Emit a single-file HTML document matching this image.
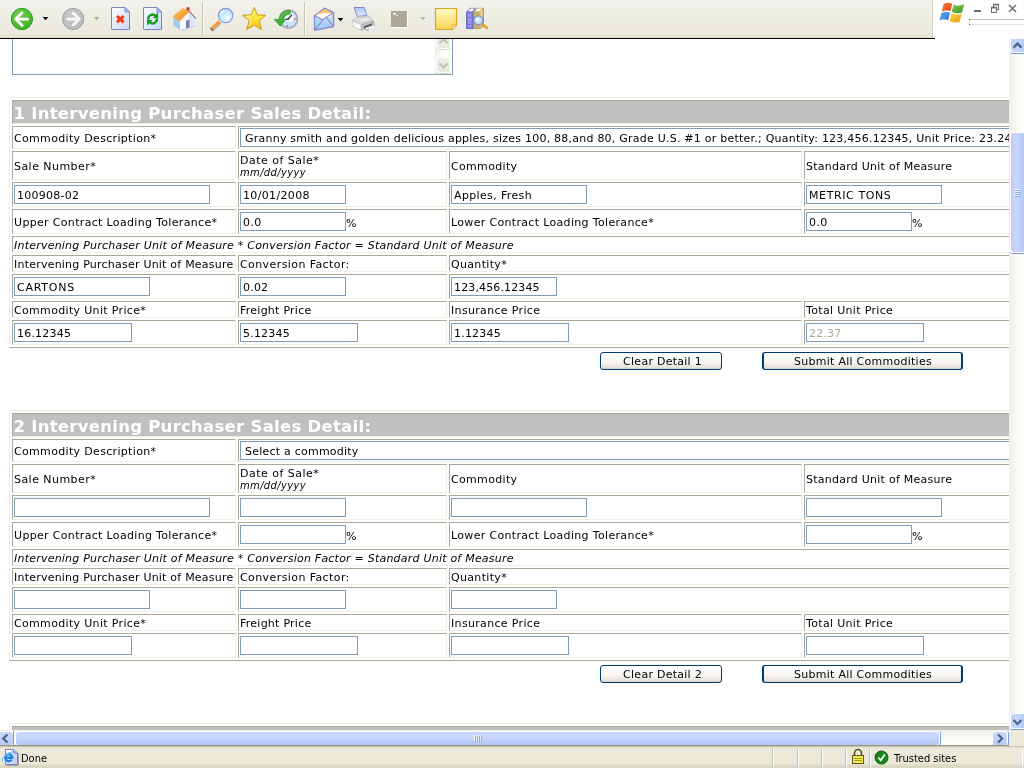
<!DOCTYPE html>
<html lang="en"><head><meta charset="utf-8"><title>Intervening Purchaser Sales Detail</title>
<style>
html,body{margin:0;padding:0}
body{width:1024px;height:768px;overflow:hidden;background:#fff;position:relative;font:11px "DejaVu Sans","Liberation Sans",sans-serif;color:#000}
.a{position:absolute}
.t{position:absolute;white-space:nowrap;line-height:13px;height:13px;letter-spacing:0.33px}
.i{font-style:italic}
.c{position:absolute;box-sizing:border-box;border:1px solid;border-color:#aca899 #f1efe2 #f1efe2 #aca899;background:#fff}
.tb{position:absolute;box-sizing:border-box;border:1px solid;border-color:#f1efe2 #aca899 #aca899 #f1efe2;background:#fff}
.h{background:#c0c0c0}
.ht{position:absolute;white-space:nowrap;font:bold 16.5px "DejaVu Sans","Liberation Sans",sans-serif;color:#fff;line-height:19px;letter-spacing:0.27px}
.in{position:absolute;box-sizing:border-box;border:1px solid #7f9db9;background:#fff;height:19px}
.in span{position:absolute;left:2px;top:3px;white-space:nowrap;line-height:13px;letter-spacing:0.2px}
.dis span{color:#aca899}
.btn{position:absolute;box-sizing:border-box;border:1px solid #003c74;border-radius:3px;background:linear-gradient(#fff 0%,#f6f5f0 60%,#e0ddd0 100%);text-align:center;line-height:17px;height:18px;letter-spacing:0.26px;box-shadow:inset 0 -1px 0 #d6d0c5}
.st{position:absolute;will-change:transform;white-space:nowrap;font:11px "DejaVu Sans Condensed","Liberation Sans",sans-serif;line-height:13px}
</style></head>
<body>
<div class="a" id="content" style="left:0;top:39px;width:1009px;height:691px;overflow:hidden;background:#fff"><div class="a" style="left:0;top:-39px;width:1100px;height:900px;will-change:transform">
<div class="a" style="left:12px;top:20px;width:441px;height:55px;box-sizing:border-box;border:1px solid #7f9db9;background:#fff"></div>
<div class="a" id="tasb" style="left:435px;top:21px;width:17px;height:53px;background:linear-gradient(90deg,#efeee5 0,#f8f7f1 3px,#fdfdf9 9px,#fefefb 17px)"></div>
<div class="a" style="left:436px;top:30px;width:15px;height:19px;background:#fff;border-radius:3px;box-shadow:0 1px 0 #dbd9c8"></div>
<div class="a" style="left:437px;top:30px;width:13px;height:18px;background:linear-gradient(#f0efe8,#eae9e0);border-radius:3px"></div>
<svg class="a" style="left:437px;top:36px" width="13" height="12" viewBox="0 0 13 12"><path d="M2.300 7.200 L6.500 3.200 L10.700 7.200" fill="none" stroke="#c6c4b6" stroke-width="2.200"/></svg>
<div class="a" style="left:436px;top:57px;width:15px;height:16px;background:#fff;border-radius:3px;box-shadow:0 1px 0 #dbd9c8"></div>
<div class="a" style="left:437px;top:58px;width:13px;height:14px;background:linear-gradient(#f0efe8,#eae9e0);border-radius:3px"></div>
<svg class="a" style="left:437px;top:58px" width="13" height="14" viewBox="0 0 13 14"><path d="M2.300 5.400 L6.500 9.400 L10.700 5.400" fill="none" stroke="#c6c4b6" stroke-width="2.200"/></svg>
<div class="tb" style="left:9px;top:97px;width:1067px;height:251px"></div>
<div class="c h" style="left:12px;top:100px;width:1061px;height:24px"></div>
<div class="ht" style="left:13.5px;top:104px;">1 Intervening Purchaser Sales Detail:</div>
<div class="c" style="left:12px;top:126px;width:224px;height:23px"></div>
<div class="t" style="left:14px;top:132px;">Commodity Description*</div>
<div class="c" style="left:238px;top:126px;width:835px;height:23px"></div>
<div class="in" style="left:240px;top:128px;width:831px"><span style="left:4px;letter-spacing:0.23px">Granny smith and golden delicious apples, sizes 100, 88,and 80, Grade U.S. #1 or better.; Quantity: 123,456.12345, Unit Price: 23.24</span></div>
<div class="c" style="left:12px;top:151px;width:224px;height:29px"></div>
<div class="t" style="left:14px;top:160px;letter-spacing:0.45px;">Sale Number*</div>
<div class="c" style="left:238px;top:151px;width:209px;height:29px"></div>
<div class="t" style="left:240px;top:154px;letter-spacing:0.48px;">Date of Sale*</div>
<div class="t i" style="left:240px;top:166px;font-size:10px">mm/dd/yyyy</div>
<div class="c" style="left:449px;top:151px;width:353px;height:29px"></div>
<div class="t" style="left:451px;top:160px;">Commodity</div>
<div class="c" style="left:804px;top:151px;width:269px;height:29px"></div>
<div class="t" style="left:806px;top:160px;letter-spacing:0.25px;">Standard Unit of Measure</div>
<div class="c" style="left:12px;top:182px;width:224px;height:25px"></div>
<div class="in" style="left:14px;top:185px;width:196px"><span style="letter-spacing:0.25px">100908-02</span></div>
<div class="c" style="left:238px;top:182px;width:209px;height:25px"></div>
<div class="in" style="left:240px;top:185px;width:106px"><span style="letter-spacing:0.35px">10/01/2008</span></div>
<div class="c" style="left:449px;top:182px;width:353px;height:25px"></div>
<div class="in" style="left:451px;top:185px;width:136px"><span style="letter-spacing:0.36px">Apples, Fresh</span></div>
<div class="c" style="left:804px;top:182px;width:269px;height:25px"></div>
<div class="in" style="left:806px;top:185px;width:136px"><span style="letter-spacing:0.6px">METRIC TONS</span></div>
<div class="c" style="left:12px;top:209px;width:224px;height:25px"></div>
<div class="t" style="left:14px;top:216px;">Upper Contract Loading Tolerance*</div>
<div class="c" style="left:238px;top:209px;width:209px;height:25px"></div>
<div class="in" style="left:240px;top:212px;width:106px"><span style="letter-spacing:0.38px">0.0</span></div>
<div class="t" style="left:346px;top:217px;">%</div>
<div class="c" style="left:449px;top:209px;width:353px;height:25px"></div>
<div class="t" style="left:451px;top:216px;">Lower Contract Loading Tolerance*</div>
<div class="c" style="left:804px;top:209px;width:269px;height:25px"></div>
<div class="in" style="left:806px;top:212px;width:106px"><span style="letter-spacing:0.38px">0.0</span></div>
<div class="t" style="left:912px;top:217px;">%</div>
<div class="c" style="left:12px;top:236px;width:1061px;height:17px"></div>
<div class="t i" style="left:14px;top:239px;letter-spacing:0.22px;">Intervening Purchaser Unit of Measure * Conversion Factor = Standard Unit of Measure</div>
<div class="c" style="left:12px;top:255px;width:224px;height:17px"></div>
<div class="t" style="left:14px;top:258px;letter-spacing:0.22px;">Intervening Purchaser Unit of Measure</div>
<div class="c" style="left:238px;top:255px;width:209px;height:17px"></div>
<div class="t" style="left:240px;top:258px;letter-spacing:0.41px;">Conversion Factor:</div>
<div class="c" style="left:449px;top:255px;width:624px;height:17px"></div>
<div class="t" style="left:451px;top:258px;">Quantity*</div>
<div class="c" style="left:12px;top:274px;width:224px;height:25px"></div>
<div class="in" style="left:14px;top:277px;width:136px"><span style="letter-spacing:0.76px">CARTONS</span></div>
<div class="c" style="left:238px;top:274px;width:209px;height:25px"></div>
<div class="in" style="left:240px;top:277px;width:106px"><span>0.02</span></div>
<div class="c" style="left:449px;top:274px;width:624px;height:25px"></div>
<div class="in" style="left:451px;top:277px;width:106px"><span style="letter-spacing:0.13px">123,456.12345</span></div>
<div class="c" style="left:12px;top:301px;width:224px;height:17px"></div>
<div class="t" style="left:14px;top:304px;">Commodity Unit Price*</div>
<div class="c" style="left:238px;top:301px;width:209px;height:17px"></div>
<div class="t" style="left:240px;top:304px;letter-spacing:0.25px;">Freight Price</div>
<div class="c" style="left:449px;top:301px;width:353px;height:17px"></div>
<div class="t" style="left:451px;top:304px;">Insurance Price</div>
<div class="c" style="left:804px;top:301px;width:269px;height:17px"></div>
<div class="t" style="left:806px;top:304px;">Total Unit Price</div>
<div class="c" style="left:12px;top:320px;width:224px;height:25px"></div>
<div class="in" style="left:14px;top:323px;width:118px"><span>16.12345</span></div>
<div class="c" style="left:238px;top:320px;width:209px;height:25px"></div>
<div class="in" style="left:240px;top:323px;width:118px"><span>5.12345</span></div>
<div class="c" style="left:449px;top:320px;width:353px;height:25px"></div>
<div class="in" style="left:451px;top:323px;width:118px"><span>1.12345</span></div>
<div class="c" style="left:804px;top:320px;width:269px;height:25px"></div>
<div class="in dis" style="left:806px;top:323px;width:118px"><span>22.37</span></div>
<div class="btn" style="left:600px;top:352px;width:122px;padding-left:3px"><span>Clear Detail 1</span></div>
<div class="btn" style="left:762px;top:352px;width:201px;border-left-width:2px;border-right-width:2px;padding-left:1px"><span>Submit All Commodities</span></div>
<div class="tb" style="left:9px;top:410px;width:1067px;height:251px"></div>
<div class="c h" style="left:12px;top:413px;width:1061px;height:24px"></div>
<div class="ht" style="left:13.5px;top:417px;">2 Intervening Purchaser Sales Detail:</div>
<div class="c" style="left:12px;top:439px;width:224px;height:23px"></div>
<div class="t" style="left:14px;top:445px;">Commodity Description*</div>
<div class="c" style="left:238px;top:439px;width:835px;height:23px"></div>
<div class="in" style="left:240px;top:441px;width:831px"><span style="left:4px;letter-spacing:0.23px">Select a commodity</span></div>
<div class="c" style="left:12px;top:464px;width:224px;height:29px"></div>
<div class="t" style="left:14px;top:473px;letter-spacing:0.45px;">Sale Number*</div>
<div class="c" style="left:238px;top:464px;width:209px;height:29px"></div>
<div class="t" style="left:240px;top:467px;letter-spacing:0.48px;">Date of Sale*</div>
<div class="t i" style="left:240px;top:479px;font-size:10px">mm/dd/yyyy</div>
<div class="c" style="left:449px;top:464px;width:353px;height:29px"></div>
<div class="t" style="left:451px;top:473px;">Commodity</div>
<div class="c" style="left:804px;top:464px;width:269px;height:29px"></div>
<div class="t" style="left:806px;top:473px;letter-spacing:0.25px;">Standard Unit of Measure</div>
<div class="c" style="left:12px;top:495px;width:224px;height:25px"></div>
<div class="in" style="left:14px;top:498px;width:196px"><span></span></div>
<div class="c" style="left:238px;top:495px;width:209px;height:25px"></div>
<div class="in" style="left:240px;top:498px;width:106px"><span></span></div>
<div class="c" style="left:449px;top:495px;width:353px;height:25px"></div>
<div class="in" style="left:451px;top:498px;width:136px"><span></span></div>
<div class="c" style="left:804px;top:495px;width:269px;height:25px"></div>
<div class="in" style="left:806px;top:498px;width:136px"><span></span></div>
<div class="c" style="left:12px;top:522px;width:224px;height:25px"></div>
<div class="t" style="left:14px;top:529px;">Upper Contract Loading Tolerance*</div>
<div class="c" style="left:238px;top:522px;width:209px;height:25px"></div>
<div class="in" style="left:240px;top:525px;width:106px"><span></span></div>
<div class="t" style="left:346px;top:530px;">%</div>
<div class="c" style="left:449px;top:522px;width:353px;height:25px"></div>
<div class="t" style="left:451px;top:529px;">Lower Contract Loading Tolerance*</div>
<div class="c" style="left:804px;top:522px;width:269px;height:25px"></div>
<div class="in" style="left:806px;top:525px;width:106px"><span></span></div>
<div class="t" style="left:912px;top:530px;">%</div>
<div class="c" style="left:12px;top:549px;width:1061px;height:17px"></div>
<div class="t i" style="left:14px;top:552px;letter-spacing:0.22px;">Intervening Purchaser Unit of Measure * Conversion Factor = Standard Unit of Measure</div>
<div class="c" style="left:12px;top:568px;width:224px;height:17px"></div>
<div class="t" style="left:14px;top:571px;letter-spacing:0.22px;">Intervening Purchaser Unit of Measure</div>
<div class="c" style="left:238px;top:568px;width:209px;height:17px"></div>
<div class="t" style="left:240px;top:571px;letter-spacing:0.41px;">Conversion Factor:</div>
<div class="c" style="left:449px;top:568px;width:624px;height:17px"></div>
<div class="t" style="left:451px;top:571px;">Quantity*</div>
<div class="c" style="left:12px;top:587px;width:224px;height:25px"></div>
<div class="in" style="left:14px;top:590px;width:136px"><span></span></div>
<div class="c" style="left:238px;top:587px;width:209px;height:25px"></div>
<div class="in" style="left:240px;top:590px;width:106px"><span></span></div>
<div class="c" style="left:449px;top:587px;width:624px;height:25px"></div>
<div class="in" style="left:451px;top:590px;width:106px"><span></span></div>
<div class="c" style="left:12px;top:614px;width:224px;height:17px"></div>
<div class="t" style="left:14px;top:617px;">Commodity Unit Price*</div>
<div class="c" style="left:238px;top:614px;width:209px;height:17px"></div>
<div class="t" style="left:240px;top:617px;letter-spacing:0.25px;">Freight Price</div>
<div class="c" style="left:449px;top:614px;width:353px;height:17px"></div>
<div class="t" style="left:451px;top:617px;">Insurance Price</div>
<div class="c" style="left:804px;top:614px;width:269px;height:17px"></div>
<div class="t" style="left:806px;top:617px;">Total Unit Price</div>
<div class="c" style="left:12px;top:633px;width:224px;height:25px"></div>
<div class="in" style="left:14px;top:636px;width:118px"><span></span></div>
<div class="c" style="left:238px;top:633px;width:209px;height:25px"></div>
<div class="in" style="left:240px;top:636px;width:118px"><span></span></div>
<div class="c" style="left:449px;top:633px;width:353px;height:25px"></div>
<div class="in" style="left:451px;top:636px;width:118px"><span></span></div>
<div class="c" style="left:804px;top:633px;width:269px;height:25px"></div>
<div class="in dis" style="left:806px;top:636px;width:118px"><span></span></div>
<div class="btn" style="left:600px;top:665px;width:122px;padding-left:3px"><span>Clear Detail 2</span></div>
<div class="btn" style="left:762px;top:665px;width:201px;border-left-width:2px;border-right-width:2px;padding-left:1px"><span>Submit All Commodities</span></div>
<div class="tb" style="left:9px;top:723px;width:1067px;height:251px"></div>
<div class="c h" style="left:12px;top:726px;width:1061px;height:24px"></div>
<div class="ht" style="left:13.5px;top:730px;">3 Intervening Purchaser Sales Detail:</div>
<div class="c" style="left:12px;top:752px;width:224px;height:23px"></div>
<div class="t" style="left:14px;top:758px;">Commodity Description*</div>
<div class="c" style="left:238px;top:752px;width:835px;height:23px"></div>
<div class="in" style="left:240px;top:754px;width:831px"><span style="left:4px;letter-spacing:0.23px">Select a commodity</span></div>
<div class="c" style="left:12px;top:777px;width:224px;height:29px"></div>
<div class="t" style="left:14px;top:786px;letter-spacing:0.45px;">Sale Number*</div>
<div class="c" style="left:238px;top:777px;width:209px;height:29px"></div>
<div class="t" style="left:240px;top:780px;letter-spacing:0.48px;">Date of Sale*</div>
<div class="t i" style="left:240px;top:792px;font-size:10px">mm/dd/yyyy</div>
<div class="c" style="left:449px;top:777px;width:353px;height:29px"></div>
<div class="t" style="left:451px;top:786px;">Commodity</div>
<div class="c" style="left:804px;top:777px;width:269px;height:29px"></div>
<div class="t" style="left:806px;top:786px;letter-spacing:0.25px;">Standard Unit of Measure</div>
<div class="c" style="left:12px;top:808px;width:224px;height:25px"></div>
<div class="in" style="left:14px;top:811px;width:196px"><span></span></div>
<div class="c" style="left:238px;top:808px;width:209px;height:25px"></div>
<div class="in" style="left:240px;top:811px;width:106px"><span></span></div>
<div class="c" style="left:449px;top:808px;width:353px;height:25px"></div>
<div class="in" style="left:451px;top:811px;width:136px"><span></span></div>
<div class="c" style="left:804px;top:808px;width:269px;height:25px"></div>
<div class="in" style="left:806px;top:811px;width:136px"><span></span></div>
<div class="c" style="left:12px;top:835px;width:224px;height:25px"></div>
<div class="t" style="left:14px;top:842px;">Upper Contract Loading Tolerance*</div>
<div class="c" style="left:238px;top:835px;width:209px;height:25px"></div>
<div class="in" style="left:240px;top:838px;width:106px"><span></span></div>
<div class="t" style="left:346px;top:843px;">%</div>
<div class="c" style="left:449px;top:835px;width:353px;height:25px"></div>
<div class="t" style="left:451px;top:842px;">Lower Contract Loading Tolerance*</div>
<div class="c" style="left:804px;top:835px;width:269px;height:25px"></div>
<div class="in" style="left:806px;top:838px;width:106px"><span></span></div>
<div class="t" style="left:912px;top:843px;">%</div>
<div class="c" style="left:12px;top:862px;width:1061px;height:17px"></div>
<div class="t i" style="left:14px;top:865px;letter-spacing:0.22px;">Intervening Purchaser Unit of Measure * Conversion Factor = Standard Unit of Measure</div>
<div class="c" style="left:12px;top:881px;width:224px;height:17px"></div>
<div class="t" style="left:14px;top:884px;letter-spacing:0.22px;">Intervening Purchaser Unit of Measure</div>
<div class="c" style="left:238px;top:881px;width:209px;height:17px"></div>
<div class="t" style="left:240px;top:884px;letter-spacing:0.41px;">Conversion Factor:</div>
<div class="c" style="left:449px;top:881px;width:624px;height:17px"></div>
<div class="t" style="left:451px;top:884px;">Quantity*</div>
<div class="c" style="left:12px;top:900px;width:224px;height:25px"></div>
<div class="in" style="left:14px;top:903px;width:136px"><span></span></div>
<div class="c" style="left:238px;top:900px;width:209px;height:25px"></div>
<div class="in" style="left:240px;top:903px;width:106px"><span></span></div>
<div class="c" style="left:449px;top:900px;width:624px;height:25px"></div>
<div class="in" style="left:451px;top:903px;width:106px"><span></span></div>
<div class="c" style="left:12px;top:927px;width:224px;height:17px"></div>
<div class="t" style="left:14px;top:930px;">Commodity Unit Price*</div>
<div class="c" style="left:238px;top:927px;width:209px;height:17px"></div>
<div class="t" style="left:240px;top:930px;letter-spacing:0.25px;">Freight Price</div>
<div class="c" style="left:449px;top:927px;width:353px;height:17px"></div>
<div class="t" style="left:451px;top:930px;">Insurance Price</div>
<div class="c" style="left:804px;top:927px;width:269px;height:17px"></div>
<div class="t" style="left:806px;top:930px;">Total Unit Price</div>
<div class="c" style="left:12px;top:946px;width:224px;height:25px"></div>
<div class="in" style="left:14px;top:949px;width:118px"><span></span></div>
<div class="c" style="left:238px;top:946px;width:209px;height:25px"></div>
<div class="in" style="left:240px;top:949px;width:118px"><span></span></div>
<div class="c" style="left:449px;top:946px;width:353px;height:25px"></div>
<div class="in" style="left:451px;top:949px;width:118px"><span></span></div>
<div class="c" style="left:804px;top:946px;width:269px;height:25px"></div>
<div class="in dis" style="left:806px;top:949px;width:118px"><span></span></div>
<div class="btn" style="left:600px;top:978px;width:122px;padding-left:3px"><span>Clear Detail 3</span></div>
<div class="btn" style="left:762px;top:978px;width:201px;border-left-width:2px;border-right-width:2px;padding-left:1px"><span>Submit All Commodities</span></div>
</div></div>
<!-- toolbar -->
<div class="a" id="toolbar" style="left:0;top:0;width:933px;height:38px;background:linear-gradient(#f2f1eb 0%,#eeede3 50%,#ebe9dc 88%,#e2dfcf 100%)"></div>
<div class="a" style="left:932px;top:0;width:1px;height:38px;background:#d8d4c0"></div>
<div class="a" style="left:0;top:38px;width:935px;height:1px;background:#000"></div>
<svg class="a" id="tbicons" style="left:0;top:0" width="933" height="38" viewBox="0 0 933 38">
<defs>
<radialGradient id="gGreen" cx="0.4" cy="0.3" r="0.9"><stop offset="0" stop-color="#72cc4c"/><stop offset="0.6" stop-color="#4fba34"/><stop offset="1" stop-color="#2fa021"/></radialGradient>
<radialGradient id="gGray" cx="0.4" cy="0.3" r="0.9"><stop offset="0" stop-color="#cacaca"/><stop offset="0.6" stop-color="#bebebe"/><stop offset="1" stop-color="#b0b0b0"/></radialGradient>
<linearGradient id="gPage" x1="0" y1="0" x2="1" y2="1"><stop offset="0" stop-color="#ffffff"/><stop offset="1" stop-color="#c4d6f6"/></linearGradient>
<linearGradient id="gStar" x1="0" y1="0" x2="0" y2="1"><stop offset="0" stop-color="#fff468"/><stop offset="0.5" stop-color="#ffe436"/><stop offset="1" stop-color="#f3bd16"/></linearGradient>
<linearGradient id="gNote" x1="0" y1="0" x2="0" y2="1"><stop offset="0" stop-color="#fffbc2"/><stop offset="1" stop-color="#fbd257"/></linearGradient>
<radialGradient id="gLens" cx="0.62" cy="0.68" r="0.75"><stop offset="0" stop-color="#ffffff"/><stop offset="0.35" stop-color="#d4f0fe"/><stop offset="1" stop-color="#a8d8f8"/></radialGradient>
<linearGradient id="gRoof" x1="0" y1="0" x2="1" y2="1"><stop offset="0" stop-color="#ffc65a"/><stop offset="1" stop-color="#e88a2a"/></linearGradient>
<linearGradient id="gMail" x1="0" y1="0" x2="0" y2="1"><stop offset="0" stop-color="#d6f0fd"/><stop offset="1" stop-color="#98c6f4"/></linearGradient>
<linearGradient id="gFlap" x1="0" y1="0" x2="1" y2="0.6"><stop offset="0" stop-color="#ffd866"/><stop offset="1" stop-color="#f2a55a"/></linearGradient>
<linearGradient id="gPaper" x1="0" y1="0" x2="0" y2="1"><stop offset="0" stop-color="#a6c6f8"/><stop offset="1" stop-color="#e6effc"/></linearGradient>
</defs>
<!-- back -->
<circle cx="21.900" cy="19" r="10.600" fill="url(#gGreen)" stroke="#1f9a1f" stroke-width="1"/>
<path d="M22 12.700 L15.700 19 L22.200 25.500 M16.500 19.100 H27.700" fill="none" stroke="#fff" stroke-width="2.800" stroke-linecap="round" stroke-linejoin="round"/>
<path d="M42.700 17 H48.300 L45.500 20.300 Z" fill="#000"/>
<!-- forward -->
<circle cx="73.150" cy="19" r="10.600" fill="url(#gGray)" stroke="#9c9c9c" stroke-width="1"/>
<path d="M73.200 13 L79.300 19 L73.200 25 M78.500 19.100 H67.500" fill="none" stroke="#f6f6f6" stroke-width="2.800" stroke-linecap="round" stroke-linejoin="round"/>
<path d="M93.800 17 H99.400 L96.600 20.300 Z" fill="#b0ad9f"/>
<!-- stop -->
<path d="M111.500 7.500 H125 L129.500 12 V29.500 H111.500 Z" fill="url(#gPage)" stroke="#7d87c8" stroke-width="1"/>
<path d="M125 7.500 V12 H129.500 Z" fill="#9fc0f2" stroke="#7d87c8" stroke-width="0.800"/>
<path d="M117 16 L123.600 22.400 M123.600 16 L117 22.400" stroke="#f83a10" stroke-width="3.100" fill="none"/>
<!-- refresh -->
<path d="M143.500 7.500 H157 L161.500 12 V29.500 H143.500 Z" fill="url(#gPage)" stroke="#7d87c8" stroke-width="1"/>
<path d="M157 7.500 V12 H161.500 Z" fill="#9fc0f2" stroke="#7d87c8" stroke-width="0.800"/>
<path d="M148.300 19.300 A4.300 4.300 0 0 1 155.600 15.800" stroke="#189a22" stroke-width="2.400" fill="none"/>
<path d="M152.800 17.900 L158.300 18.600 L158 12.300 Z" fill="#189a22"/>
<path d="M156.900 18.700 A4.300 4.300 0 0 1 149.600 22.200" stroke="#189a22" stroke-width="2.400" fill="none"/>
<path d="M152.400 20.100 L146.900 19.400 L147.200 25.700 Z" fill="#189a22"/>
<!-- home -->
<rect x="186.500" y="7.300" width="3" height="5.500" fill="#c23232"/>
<path d="M173.500 17 L179.500 21 V29.600 L173.500 25.600 Z" fill="#a5c8ee"/>
<path d="M179.500 21 L189 12 L195 18.500 V26 L181 30.300 L179.500 29.600 Z" fill="#f4f7fc"/>
<path d="M189 12 L195 18.500 V26 L190 27.500 Z" fill="#dfe6f4"/>
<path d="M172.300 16.800 L183 8 L189.700 11.300 L179.600 21.300 Z" fill="url(#gRoof)"/>
<path d="M189.300 11.300 L195.800 18.600" stroke="#9a7a80" stroke-width="1.200" fill="none"/>
<path d="M179.500 21.300 V29.600 L181 30.300 L195 26" stroke="#a9b4d8" stroke-width="0.700" fill="none"/>
<path d="M186 20.800 L189.600 19.600 V27.300 L186 28.500 Z" fill="#7a7fb5"/>
<!-- separator -->
<rect x="202" y="2" width="1" height="34" fill="#c9c6b6"/><rect x="203" y="2" width="1" height="34" fill="#f8f7f2"/>
<!-- search -->
<path d="M211.500 30.400 L220 22.400" stroke="#a9a0d8" stroke-width="3.600" stroke-linecap="butt"/>
<path d="M211 29.400 L219.500 21.400" stroke="#f2a03c" stroke-width="3.400" stroke-linecap="butt"/>
<path d="M210.500 27.900 L213 30.500" stroke="#76705c" stroke-width="1.400"/>
<circle cx="225.600" cy="15.600" r="7.200" fill="url(#gLens)" stroke="#8c94dc" stroke-width="1.100"/>
<path d="M220.500 14 A5.500 5.500 0 0 1 224 10.600" fill="none" stroke="#fff" stroke-width="1.300" stroke-linecap="round"/>
<!-- star -->
<path d="M254.300 7.300 L257.300 14.800 L265.700 15.400 L259.200 20.600 L261.500 29.500 L254.300 25.100 L246.600 29.500 L249.400 20.600 L242.500 15.400 L251.200 14.800 Z" fill="url(#gStar)" stroke="#c89a18" stroke-width="1" stroke-linejoin="round"/>
<path d="M254.200 10.500 L252.300 16 L246 16.400 L251 20.300 L249.300 26" fill="none" stroke="#fff9b0" stroke-width="0.900" opacity="0.800"/>
<!-- history -->
<circle cx="288.400" cy="19" r="9" fill="#c4e6f9" stroke="#a2a2ac" stroke-width="1.700"/>
<path d="M283.400 26.500 A9 9 0 0 0 297.300 20.300" fill="none" stroke="#b4acdc" stroke-width="1.700"/>
<circle cx="289.500" cy="17.500" r="4.500" fill="#eef8fe"/>
<path d="M288 19.200 L292 14.600 M288.600 19.200 H286" stroke="#3c3c3c" stroke-width="1.400" fill="none"/>
<rect x="294" y="18.300" width="1.400" height="1.600" fill="#f04a28"/><rect x="286.700" y="25" width="1.400" height="1.700" fill="#f04a28"/>
<path d="M290.800 10.800 A9 9 0 0 0 279.600 19.400 L274.200 19.400 L280.300 26.200 L285.600 19.400 L283.600 19.400 A5.200 5.200 0 0 1 289.800 14.300 Z" fill="#3fb232" stroke="#1f8e1f" stroke-width="0.600"/>
<path d="M289.500 12 A7.500 7.500 0 0 0 281 19" fill="none" stroke="#8be06a" stroke-width="1" opacity="0.700"/>
<!-- separator -->
<rect x="304" y="2" width="1" height="34" fill="#c9c6b6"/><rect x="305" y="2" width="1" height="34" fill="#f8f7f2"/>
<!-- mail -->
<path d="M314.500 15.800 L324.500 8.200 L333.600 12.600 V26.500 L314.500 30.300 Z" fill="url(#gMail)" stroke="#8a88d4" stroke-width="1.300" stroke-linejoin="round"/>
<path d="M315.600 15.400 L324.500 9 L332.900 12.900 L325 18 Z" fill="url(#gFlap)"/>
<path d="M316.800 14.600 L325 12.400 L331.800 13.500 L330.600 17.200 L322.300 20 L317.200 17.800 Z" fill="#fffaf0"/>
<path d="M318.500 17.800 L322.300 19.600 L330.300 16.800" stroke="#f3d9b0" stroke-width="0.800" fill="none"/>
<path d="M314.500 15.800 L322.500 19.800 L333.600 12.600 M314.500 30.300 L323.300 19.300 M333.600 26.500 L326.200 17.600" stroke="#8a88d4" stroke-width="1.100" fill="none"/>
<path d="M337.700 18 H343.300 L340.500 21.300 Z" fill="#000"/>
<!-- print -->
<path d="M354 7.500 H364.300 L367 15.400 L357.200 16.300 Z" fill="url(#gPaper)" stroke="#8a88d0" stroke-width="1"/>
<path d="M352.300 20.600 L357.200 17 L369.200 16 L373.800 20.600 L361.400 24.500 Z" fill="#dedede" stroke="#b4b4b4" stroke-width="0.600"/>
<path d="M358.500 18.800 L367.500 17.600 L370.500 20 L361.500 22 Z" fill="#ececec" stroke="#c4c4c4" stroke-width="0.500"/>
<path d="M352.300 20.800 L361.400 24.600 V30.300 L352.300 26.400 Z" fill="#f6f6f6" stroke="#b4b4b4" stroke-width="0.600"/>
<path d="M361.400 24.600 L373.800 20.700 L374.600 26 L361.400 30.300 Z" fill="#c2c2c2" stroke="#a4a4a4" stroke-width="0.600"/>
<path d="M363.800 26.300 L372 23.600 V25.600 L363.800 28.400 Z" fill="#5a5a5a"/>
<path d="M365 28.200 L373 25.500 L375 26.800 L366.500 29.800 Z" fill="#eeeef8"/>
<path d="M365 29 L366.500 30.300 L369 29.500" stroke="#8a88d0" stroke-width="0.900" fill="none"/>
<rect x="371" y="22.200" width="1.800" height="1" fill="#5cc044"/>
<!-- gray square -->
<rect x="391" y="11" width="17" height="17" fill="#fff"/>
<rect x="391" y="11" width="16" height="16" fill="#aca899"/>
<rect x="393" y="13" width="3" height="1.500" fill="#fff"/><rect x="396.500" y="15" width="1.300" height="1.300" fill="#fff"/>
<path d="M420 17 H425.600 L422.800 20.200 Z" fill="#b8b6ac"/>
<!-- note -->
<path d="M435.500 8.500 H456.500 V25 L452 29.500 H435.500 Z" fill="url(#gNote)" stroke="#dca622" stroke-width="1.200"/>
<path d="M452 29.500 V25 H456.500 Z" fill="#fff7c8" stroke="#dca622" stroke-width="0.800"/>
<!-- research -->
<path d="M466.500 12 L470.500 8.300 L475.500 8.300 L473 12 V28.500 H466.500 Z" fill="#7a7cda" stroke="#5c5fbe" stroke-width="0.800"/>
<path d="M468 11.300 L471 8.600 L474.500 8.600 L472.300 11.300 Z" fill="#fff"/>
<path d="M468 14 H471.500 V27 H468 Z" fill="#9a9ce8"/>
<path d="M468 17.500 H471.500 M468 24.500 H471.500" stroke="#6466c4" stroke-width="0.800"/>
<path d="M473.500 12 L477.500 8.300 L483.500 8.300 V26 L480 28.500 H473.500 Z" fill="#cdb068" stroke="#a8893e" stroke-width="0.800"/>
<path d="M475 11.300 L478 8.600 L482 8.600 L479.600 11.300 Z" fill="#fff"/>
<path d="M479.800 12 L483 9 V25.500 L479.800 28 Z" fill="#e2cc8c"/>
<path d="M482 24 L487 28" stroke="#e0a428" stroke-width="2.600" stroke-linecap="round"/>
<circle cx="478.400" cy="20.400" r="4.500" fill="#c6dcf4" stroke="#7f8fd0" stroke-width="1.400"/>
<circle cx="477.600" cy="19.400" r="2" fill="#eef6fe"/>
</svg>
<!-- top-right -->
<svg class="a" id="winctl" style="left:933px;top:0" width="91" height="38" viewBox="933 0 91 38">
<defs>
<linearGradient id="fR" x1="0" y1="0" x2="1" y2="1"><stop offset="0" stop-color="#f6842a"/><stop offset="1" stop-color="#e43c1c"/></linearGradient>
<linearGradient id="fG" x1="0" y1="0" x2="1" y2="1"><stop offset="0" stop-color="#84c848"/><stop offset="1" stop-color="#3c9a2a"/></linearGradient>
<linearGradient id="fB" x1="0" y1="0" x2="1" y2="1"><stop offset="0" stop-color="#6ab0f0"/><stop offset="1" stop-color="#2a6cc8"/></linearGradient>
<linearGradient id="fY" x1="0" y1="0" x2="1" y2="1"><stop offset="0" stop-color="#fdd648"/><stop offset="1" stop-color="#e89c10"/></linearGradient>
</defs>
<g transform="translate(952 12.400) scale(1.090) translate(-951.300 -12.500)">
<path d="M943.500 5 Q946.500 2.500 951.500 4.500 L949.800 11.500 Q945.500 9.500 942 12 Z" fill="url(#fR)"/>
<path d="M952.800 5.200 Q957.500 7.500 962.500 5 L960.500 12.500 Q956 14.500 951 12 Z" fill="url(#fG)"/>
<path d="M941.500 13.200 Q945 10.800 949.500 12.800 L947.700 19.800 Q943.500 17.800 939.800 20 Z" fill="url(#fB)"/>
<path d="M950.700 13.300 Q955.500 15.700 960.200 13.700 L958.300 21 Q953.500 23 949 20.300 Z" fill="url(#fY)"/>
</g>
<rect x="974" y="10" width="7" height="2" fill="#6e6e6e"/>
<path d="M993.500 7 V4.800 H998.500 V9.500 H996.800 M991.500 7.800 H996.500 V12.500 H991.500 Z" fill="none" stroke="#6e6e6e" stroke-width="1.100"/><path d="M993 4.500 H999 M991 7.500 H997" stroke="#6e6e6e" stroke-width="1.400"/>
<path d="M1009 5 L1016 12 M1016 5 L1009 12" stroke="#6e6e6e" stroke-width="1.500"/>
<path d="M969.500 24.500 H1024" fill="none" stroke="#e0e0e0" stroke-width="1"/><path d="M969.500 19.500 V24.500" fill="none" stroke="#d8d8d8" stroke-width="1"/><path d="M969.500 19.500 H1024" fill="none" stroke="#c2c2c2" stroke-width="1"/>
<rect x="969" y="19" width="1" height="1" fill="#555"/><rect x="969" y="24" width="1" height="1" fill="#555"/>
</svg>
<!-- vertical scrollbar -->
<div class="a" id="vsb" style="left:1009px;top:39px;width:15px;height:691px;background:linear-gradient(90deg,#eeede5 0,#f3f2ec 3px,#fbfbf8 10px,#fefefb 15px)"></div>
<div class="a" style="left:1010px;top:39px;width:14px;height:14px;background:#fff;border-bottom:1px solid #7b9ad8;border-bottom-left-radius:3px"></div>
<div class="a" style="left:1011px;top:39px;width:16px;height:13px;border-radius:0 0 3px 3px;background:linear-gradient(90deg,#bccdf8 0,#c6d5fc 5px,#bbcefa 11px,#b2c4f2 14px)"></div>
<svg class="a" style="left:1011px;top:39px" width="13" height="13" viewBox="0 0 13 13"><path d="M2.500 8.600 L6.500 4.600 L10.500 8.600" fill="none" stroke="#4d6185" stroke-width="2.200"/></svg>
<div class="a" style="left:1010px;top:132px;width:14px;height:121px;background:#fff;border-bottom:1px solid #7b9ad8;border-radius:3px 0 0 3px"></div>
<div class="a" style="left:1011px;top:133px;width:16px;height:119px;border-radius:3px;background:linear-gradient(90deg,#bccdf8 0,#c8d6fc 5px,#bacdfa 11px,#b2c4f2 14px)"></div>
<div class="a" style="left:1014px;top:189px;width:6px;height:1px;background:#eef3fe;box-shadow:1px 1px 0 #8ea8e4,0 2px 0 #eef3fe,1px 3px 0 #8ea8e4,0 4px 0 #eef3fe,1px 5px 0 #8ea8e4,0 6px 0 #eef3fe,1px 7px 0 #8ea8e4"></div>
<div class="a" style="left:1010px;top:713px;width:14px;height:17px;background:#fff;border-bottom:1px solid #7b9ad8;border-radius:3px 0 0 3px;box-sizing:border-box"></div>
<div class="a" style="left:1011px;top:714px;width:16px;height:14px;border-radius:3px;background:linear-gradient(90deg,#bccdf8 0,#c6d5fc 5px,#bbcefa 11px,#b2c4f2 14px)"></div>
<svg class="a" style="left:1011px;top:715px" width="13" height="13" viewBox="0 0 13 13"><path d="M2.500 5 L6.500 9 L10.500 5" fill="none" stroke="#4d6185" stroke-width="2.200"/></svg>
<!-- horizontal scrollbar -->
<div class="a" id="hsb" style="left:0;top:730px;width:1009px;height:16px;background:linear-gradient(#eeede5 0,#f3f2ec 3px,#fbfbf8 10px,#fefefb 15px)"></div>
<div class="a" style="left:0;top:731px;width:14px;height:15px;background:#fff;box-sizing:border-box;border-right:1px solid #7b9ad8;border-bottom:1px solid #a9a591"></div>
<div class="a" style="left:-3px;top:732px;width:16px;height:13px;border-radius:3px;background:linear-gradient(#c6d5fc 0,#c6d5fc 5px,#bbcefa 10px,#b2c4f2 13px)"></div>
<svg class="a" style="left:0;top:732px" width="13" height="13" viewBox="0 0 13 13"><path d="M7.500 2.500 L3.300 6.500 L7.500 10.500" fill="none" stroke="#4d6185" stroke-width="2.200"/></svg>
<div class="a" style="left:15px;top:731px;width:926px;height:15px;background:#fff;box-sizing:border-box;border-right:1px solid #7b9ad8;border-bottom:1px solid #a9a591;border-radius:3px"></div>
<div class="a" style="left:16px;top:732px;width:923px;height:13px;border-radius:3px;background:linear-gradient(#c6d5fc 0,#c8d6fc 5px,#bacdfa 10px,#b2c4f2 13px)"></div>
<div class="a" style="left:474px;top:735px;width:1px;height:6px;background:#eef3fe;box-shadow:1px 1px 0 #8ea8e4,2px 0 0 #eef3fe,3px 1px 0 #8ea8e4,4px 0 0 #eef3fe,5px 1px 0 #8ea8e4,6px 0 0 #eef3fe,7px 1px 0 #8ea8e4"></div>
<div class="a" style="left:992px;top:731px;width:17px;height:15px;background:#fff;box-sizing:border-box;border-right:1px solid #7b9ad8;border-bottom:1px solid #a9a591;border-radius:3px"></div>
<div class="a" style="left:993px;top:732px;width:14px;height:13px;border-radius:3px;background:linear-gradient(#c6d5fc 0,#c6d5fc 5px,#bbcefa 10px,#b2c4f2 13px)"></div>
<svg class="a" style="left:993px;top:732px" width="14" height="13" viewBox="0 0 14 13"><path d="M5 2.500 L9.200 6.500 L5 10.500" fill="none" stroke="#4d6185" stroke-width="2.200"/></svg>
<div class="a" style="left:1009px;top:730px;width:15px;height:16px;background:#ece9d8"></div>
<!-- status bar -->
<div class="a" id="status" style="left:0;top:746px;width:1024px;height:22px;background:linear-gradient(#c9c6b4 0,#c9c6b4 1px,#e1decd 1px,#e1decd 2px,#ece9d8 2px,#ece9d8 17px,#e7e4d3 18px,#e0ddcb 19px,#d8d5c1 20.500px,#dcd9c7 22px)"></div>
<div class="a" style="left:0;top:745px;width:1009px;height:1px;background:#98957f"></div>
<svg class="a" style="left:0;top:747px" width="20" height="21" viewBox="0 747 20 21">
<defs><linearGradient id="gIePage" x1="0" y1="0" x2="1" y2="0.5"><stop offset="0" stop-color="#ffffff"/><stop offset="1" stop-color="#c4d0f6"/></linearGradient></defs>
<path d="M6.500 765.500 H18.500 V753" fill="none" stroke="#a8a69a" stroke-width="1"/>
<path d="M5.500 749.500 H13.500 L17.500 753 V764.500 H5.500 Z" fill="url(#gIePage)" stroke="#7a7cc0" stroke-width="1"/>
<path d="M13.500 749.500 V753 H17.500" fill="#9fb6ea" stroke="#7a7cc0" stroke-width="0.800"/>
<path d="M6.500 751 H13" stroke="#fff" stroke-width="1.600"/>
<path d="M11.700 759.700 A3.500 3.500 0 1 1 12.300 757.800 H5.600" fill="none" stroke="#1e86e2" stroke-width="2.400"/>
<path d="M6.500 755 A3.500 3.500 0 0 1 10.500 754.200" fill="none" stroke="#46b6f6" stroke-width="1.400"/>
<path d="M2.300 761.800 Q2 755 12.800 751.600" fill="none" stroke="#58bcf4" stroke-width="1.100"/>
<circle cx="4.200" cy="761" r="1.100" fill="#dff2fd"/>
</svg>
<div class="st" style="left:21px;top:752px">Done</div>
<div class="a" style="left:772px;top:748px;width:1px;height:19px;background:#c5c2b2;box-shadow:1px 0 0 #fff,25px 0 0 #c5c2b2,26px 0 0 #fff,49px 0 0 #c5c2b2,50px 0 0 #fff,73px 0 0 #c5c2b2,74px 0 0 #fff,97px 0 0 #c5c2b2,98px 0 0 #fff"></div>
<svg class="a" style="left:848px;top:747px" width="46" height="20" viewBox="848 747 46 20">
<path d="M854.500 756 V753 A3.500 3.500 0 0 1 861.500 753 V756" fill="none" stroke="#55551a" stroke-width="1.600"/>
<rect x="852.500" y="755.500" width="11" height="8" fill="#f2e84a" stroke="#5a5a20" stroke-width="1"/>
<path d="M854 758.500 H862 M854 760.500 H862" stroke="#a8a020" stroke-width="1"/>
<circle cx="881.500" cy="757.500" r="6.500" fill="#168a1c" stroke="#0c5c10" stroke-width="1"/>
<path d="M878.300 757.500 L880.800 760.200 L884.800 754.500" fill="none" stroke="#fff" stroke-width="1.800"/>
</svg>
<div class="st" style="left:894px;top:752px">Trusted sites</div>
<div class="a" style="left:1022px;top:749px;width:1px;height:18px;background:#fff"></div>

</body></html>
